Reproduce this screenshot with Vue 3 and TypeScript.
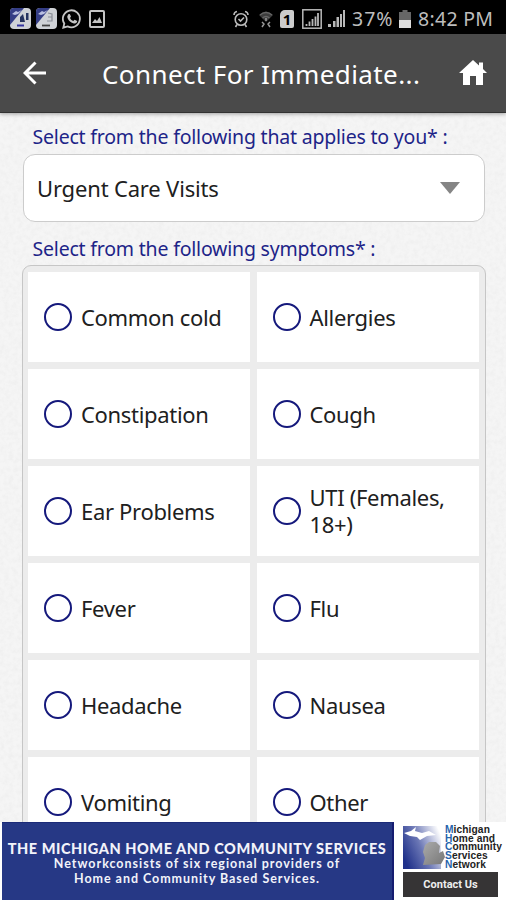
<script setup lang="ts">
const symptoms: string[] = [
  'Common cold', 'Allergies',
  'Constipation', 'Cough',
  'Ear Problems', 'UTI (Females, 18+)',
  'Fever', 'Flu',
  'Headache', 'Nausea',
  'Vomiting', 'Other',
]
const networkName: string[] = ['Michigan', 'Home and', 'Community', 'Services', 'Network']
</script>

<template>
  <div class="screen">
    <div class="status">
      <div class="notices">
        <svg v-for="n in 2" :key="n" class="app" viewBox="0 0 21 21">
          <rect width="21" height="21" rx="4" fill="#cfd2d6" />
          <path d="M4 0H14L0 17V4Q0 0 4 0Z" fill="#343d85" />
          <path d="M2 6l4-3 2 1 4-2-4 4-3 1z" fill="#b8bee0" />
          <template v-if="n === 1">
            <path d="M10 14V9l3-3 2 8zM16 5h2.500v7H16z" fill="#26345f" />
            <path d="M7 17.500h7" stroke="#3434a0" stroke-width="2" />
          </template>
          <template v-else>
            <path d="M12 5l4 1v7h-5M12 9h4" fill="none" stroke="#8a8e97" stroke-width="1.200" />
            <path d="M6 17.500h8" stroke="#444" stroke-width="1.800" />
          </template>
        </svg>
        <svg class="chat" viewBox="0 0 20 20">
          <path d="M2.300 14.500A8.500 8.500 0 1 1 5.600 17.400L1.300 18.700Z" fill="none" stroke="#c4c4c4" stroke-width="1.800" />
          <path d="M6.200 5.200l1.600-.3 1.200 2.700-1 1.300c.8 1.500 1.800 2.500 3.300 3.200l1.300-1.300 2.600 1.300c0 2-1.700 2.700-3.300 2.300-3.500-.8-6.200-3.600-6.700-6.600z" fill="#c4c4c4" />
        </svg>
        <svg class="photo" viewBox="0 0 16 18">
          <rect x="1" y="1" width="14" height="16" rx="1" fill="none" stroke="#c4c4c4" stroke-width="2" />
          <path d="M3 13l3-4 2 2 2.500-4L13 13z" fill="#c4c4c4" />
        </svg>
      </div>
      <div class="signals">
        <svg class="alarm" viewBox="0 0 16 18">
          <g fill="none" stroke="#bbb" stroke-width="1.600">
            <circle cx="8" cy="9.500" r="5.800" />
            <path d="M1 5Q1 2 4 1.500M15 5Q15 2 12 1.500M4 14.500L2.500 17M12 14.500L13.500 17M5.500 9l2 2 3.500-3.500" />
          </g>
        </svg>
        <svg class="wifi" viewBox="0 0 14 18">
          <path d="M0 5Q7-2 14 5L7 12Z" fill="#3d3d3d" />
          <path d="M1 5Q7 0 13 5M3.500 8Q7 5 10.500 8" fill="none" stroke="#666" stroke-width="1.300" />
          <path d="M7 8v3M3 12l2 2-2 3M11 12l-2 2 2 3" fill="none" stroke="#999" stroke-width="1.500" />
        </svg>
        <div class="sim">1</div>
        <svg class="boxed" viewBox="0 0 20 20">
          <rect x=".8" y=".8" width="18.400" height="18.400" fill="none" stroke="#b8b8b8" stroke-width="1.500" />
          <path d="M4.500 17v-2M7.500 17v-4.500M10.500 17v-7M13.500 17V7.500M16 17V4" stroke="#b8b8b8" stroke-width="1.800" />
        </svg>
        <svg class="bars" viewBox="0 0 17 18">
          <path d="M0 17h3v-3H0zM5 17h2.500v-6H5zM8.500 17H11V7H8.500zM12 17h2V4h-2zM15 17h2V0h-2z" fill="#b8b8b8" />
        </svg>
        <span class="percent">37%</span>
        <svg class="battery" viewBox="0 0 12 18">
          <path d="M3.500 0h5v2H12v8H0V2h3.500z" fill="#666" />
          <path d="M0 10h12v8H0z" fill="#ddd" />
        </svg>
        <span class="clock">8:42 PM</span>
      </div>
    </div>

    <header class="bar">
      <svg class="back" viewBox="0 0 24 24">
        <path d="M23 12H2.500M12.500 1.500L2 12L12.500 22.500" fill="none" stroke="#fff" stroke-width="3" />
      </svg>
      <h1>Connect For Immediate...</h1>
      <svg class="home" viewBox="0 0 28 26">
        <path d="M14 0L20 5.500V2.500H24V9L28 13H24V25H17V16H11V25H4V13H0Z" fill="#fff" />
      </svg>
    </header>

    <main class="page">
      <svg class="paper" width="506" height="710">
        <filter id="grain">
          <feTurbulence type="fractalNoise" baseFrequency="0.22" numOctaves="3" seed="4" />
          <feColorMatrix values="0 0 0 0 .5  0 0 0 0 .5  0 0 0 0 .5  .55 0 0 0 -.2" />
        </filter>
        <rect width="506" height="710" filter="url(#grain)" />
      </svg>
      <div class="form">
        <p class="label first"><span>Select from the following that applies to you* :</span></p>
        <div class="select">
          <span>Urgent Care Visits</span>
          <svg class="caret" viewBox="0 0 20 12"><path d="M0 0H20L10 12Z" fill="#858585" /></svg>
        </div>
        <p class="label second"><span>Select from the following symptoms* :</span></p>
        <div class="options">
          <div v-for="s in symptoms" :key="s" class="option">
            <i class="radio"></i>
            <span class="name">{{ s }}</span>
          </div>
        </div>
      </div>
    </main>

    <footer class="ad">
      <div class="pitch">
        <strong>THE MICHIGAN HOME AND COMMUNITY SERVICES</strong>
        <span class="line2">Networkconsists of six regional providers of</span>
        <span class="line3">Home and Community Based Services.</span>
      </div>
      <div class="brand">
        <div class="logo">
          <svg class="map" viewBox="0 0 42 43">
            <defs>
              <linearGradient id="sky" x1="0" y1=".7" x2="1" y2=".2">
                <stop offset="0" stop-color="#20318a" />
                <stop offset=".45" stop-color="#6975b4" />
                <stop offset="1" stop-color="#fff" />
              </linearGradient>
              <linearGradient id="land" x1="0" y1="0" x2="1" y2="1">
                <stop offset="0" stop-color="#aaa" />
                <stop offset="1" stop-color="#777" />
              </linearGradient>
            </defs>
            <rect width="38" height="43" fill="url(#sky)" />
            <path d="M1 7L8 5L13 1L12 5L19 7L26 5L33 9L24 10L17 14L14 11L7 10Z" fill="#fff" />
            <path d="M26 16L33 16L37 20L36 27L40 25L42 31L38 38L20 39L22 32L20 26L22 19Z" fill="url(#land)" />
          </svg>
          <div class="names">
            <span v-for="n in networkName" :key="n"><b>{{ n[0] }}</b>{{ n.slice(1) }}</span>
          </div>
        </div>
        <div class="contact">Contact Us</div>
      </div>
    </footer>
  </div>
</template>

<style>
body { margin: 0; overflow: hidden; }
</style>

<style scoped>
* { box-sizing: border-box; }
svg { display: block; flex: none; }
.screen {
  width: 506px; height: 900px; overflow: hidden;
  display: flex; flex-direction: column;
  font-family: "Noto Sans", sans-serif; background: #f5f5f5;
}
.status {
  height: 34px; flex: none; background: #000; color: #bdbdbd;
  display: flex; justify-content: space-between; align-items: center;
  padding: 3px 12px 0 10px; font-size: 19.500px; white-space: nowrap;
}
.notices, .signals { display: flex; align-items: center; }
.app { width: 21px; height: 21px; margin-right: 5px; }
.chat { width: 20px; height: 20px; margin-right: 7px; }
.photo { width: 16px; height: 18px; }
.alarm { width: 16px; height: 18px; margin-right: 10px; }
.wifi { width: 14px; height: 18px; margin-right: 7px; }
.sim {
  width: 14px; height: 18px; margin-right: 8px; background: #ccc; color: #000;
  border-radius: 5px 2px 2px 2px; font: bold 15px/18px "Noto Sans", sans-serif; text-align: center;
}
.boxed { width: 20px; height: 20px; margin-right: 6px; }
.bars { width: 17px; height: 18px; margin-right: 7px; }
.percent { width: 43px; margin-right: 4px; letter-spacing: 1px; }
.battery { width: 12px; height: 18px; margin-right: 7px; }
.clock { width: 76px; letter-spacing: .3px; }
.bar {
  height: 79px; flex: none; background: #4a4a4a; border-bottom: 1px solid #333; z-index: 1;
  display: flex; align-items: center; padding: 0 19px 0 23px;
  box-shadow: 0 1px 4px rgba(0, 0, 0, .35);
}
.back { width: 24px; height: 24px; }
h1 { margin: 2px 0 0 55px; font-size: 26px; font-weight: 400; letter-spacing: .4px; color: #fff; flex: 1; white-space: nowrap; }
.home { width: 28px; height: 26px; }
.page { flex: 1; min-height: 0; display: grid; overflow: hidden; }
.paper { grid-area: 1 / 1; opacity: .35; }
.form { grid-area: 1 / 1; z-index: 1; padding: 0 21px 0 22px; }
.label { margin: 0; padding-left: 10.500px; font-size: 19.500px; letter-spacing: -.2px; color: #1d2488; white-space: nowrap; line-height: 24px; }
.first { padding-top: 12px; height: 41px; }
.second { padding-top: 15px; height: 43px; }
.select {
  height: 68px; margin: 0 1px; background: #fff; border: 1px solid #ccc; border-radius: 12px;
  display: flex; align-items: center; justify-content: space-between; padding: 0 24px 0 13px;
  font-size: 22px; letter-spacing: -.17px; color: #202020; white-space: nowrap;
}
.caret { width: 20px; height: 12px; }
.options {
  height: 640px; background: #ececec; border: 1px solid #c6c6c6; border-radius: 9px;
  padding: 6px 6px 0 5px; display: grid; grid-template-columns: 222px 222px;
  grid-auto-rows: 90px; gap: 7px 6.500px; align-content: start;
}
.option { background: #fff; display: flex; align-items: center; padding-left: 16px; }
.radio { width: 28px; height: 28px; flex: none; border: 2.500px solid #15197c; border-radius: 50%; }
.name { margin-left: 9px; font-size: 22px; line-height: 27px; letter-spacing: -.32px; color: #202020; }
.ad { height: 78px; flex: none; background: #fff; display: flex; padding-left: 2px; z-index: 2; }
.pitch {
  width: 392px; background: #263885; border-right: 2px solid #151c70; border-top: 1px solid #1c2b78; color: #f2f3fa;
  display: flex; flex-direction: column; align-items: center; padding-top: 18px;
  font: bold 12.500px/14.500px Lato, sans-serif; white-space: nowrap;
}
.pitch strong { font-size: 14.500px; line-height: 16px; font-weight: 900; letter-spacing: .56px; }
.line2 { letter-spacing: .98px; }
.line3 { letter-spacing: .95px; }
.brand { padding: 4px 0 0 9px; width: 112px; }
.logo { display: flex; height: 43px; }
.map { width: 42px; height: 43px; }
.names { display: flex; flex-direction: column; font: bold 10.200px/8.700px "Liberation Sans", sans-serif; letter-spacing: .1px; color: #222; }
.names b { color: #2864ad; }
.contact {
  width: 95px; height: 25px; margin-top: 3px; background: #363435; color: #eee;
  font: bold 11px/25px Roboto, sans-serif; text-align: center;
}
</style>
